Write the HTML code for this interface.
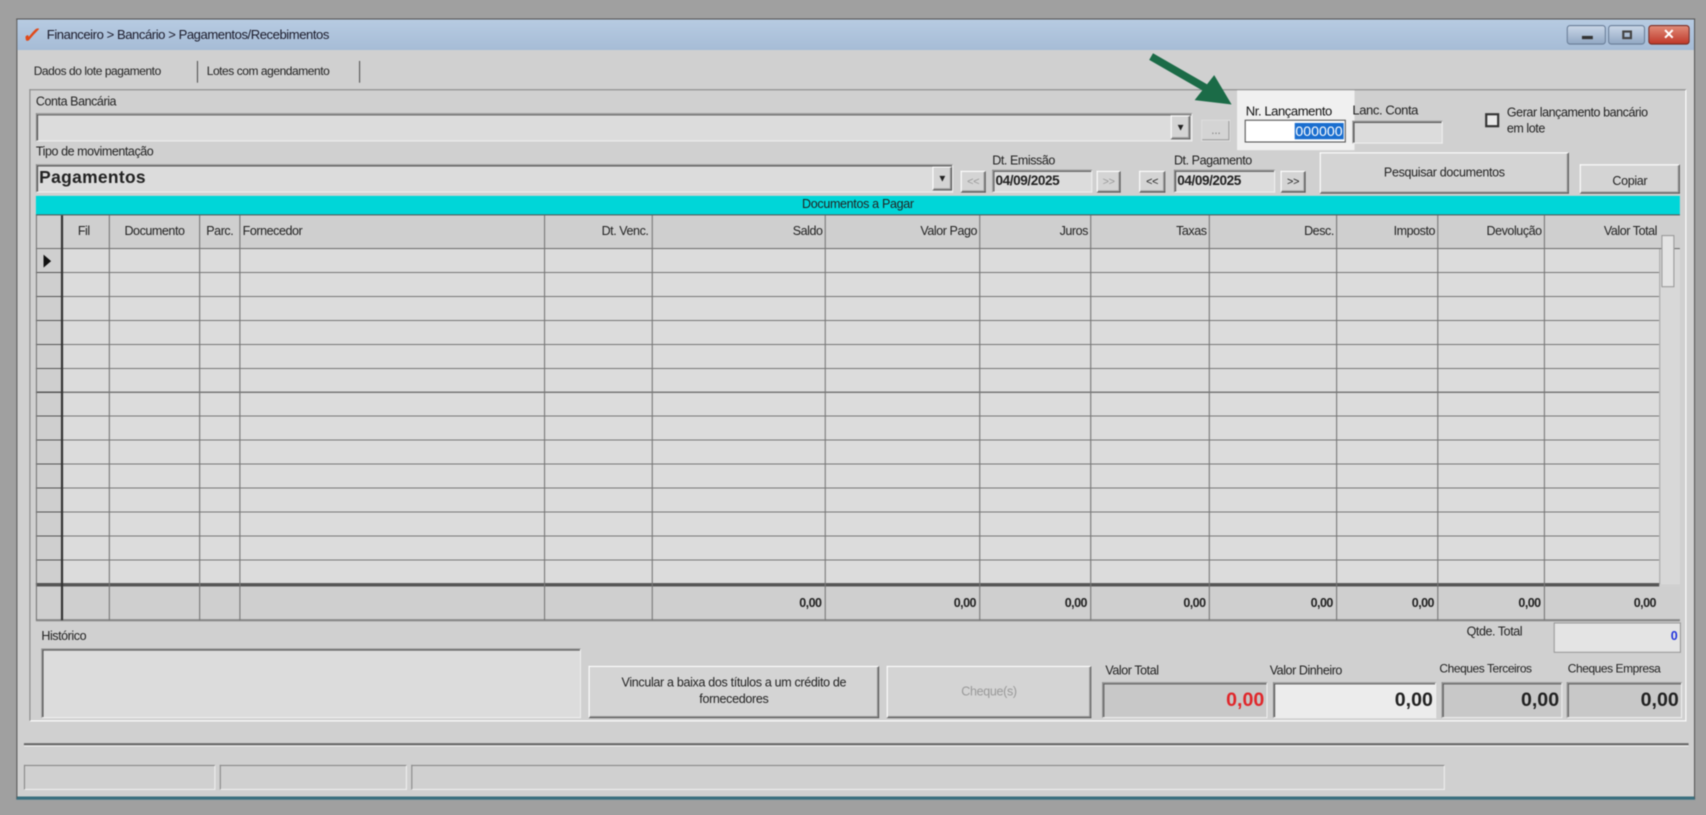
<!DOCTYPE html>
<html><head><meta charset="utf-8">
<style>
*{box-sizing:border-box;margin:0;padding:0}
html,body{width:1706px;height:815px;overflow:hidden;background:#a0a0a0}
#w{position:absolute;left:0;top:0;width:1568px;height:749px;transform:scale(1.0880,1.0881);transform-origin:0 0;font-family:"Liberation Sans",sans-serif;font-size:11.5px;color:#222;filter:blur(0.5px)}
.a{position:absolute}
.in{position:absolute;background:#dcdcdc;border:1px solid #888;border-right-color:#eee;border-bottom-color:#eee;box-shadow:inset 1px 1px 0 #555}
.btn{position:absolute;background:#d4d4d4;border:1px solid #fff;border-right-color:#555;border-bottom-color:#555;box-shadow:inset -1px -1px 0 #999;display:flex;align-items:center;justify-content:center;text-align:center;letter-spacing:-0.3px}
.lbl{position:absolute;white-space:nowrap;letter-spacing:-0.4px}
.v{position:absolute;top:198px;height:372px;width:1px;background:#777}
.h{position:absolute;top:198px;text-align:right;white-space:nowrap;letter-spacing:-0.4px;line-height:30px}
.t{position:absolute;top:540px;line-height:30px;font-weight:bold;text-align:right;letter-spacing:-0.5px}
</style></head><body><div id="w">
<div class="a" style="left:15px;top:17px;width:1543px;height:718px;background:#d0d0d0;border:1px solid #555;border-bottom:3px solid #3a6f7e"></div>
<div class="a" style="left:16px;top:18px;width:1541px;height:28px;background:linear-gradient(#b7cbe2,#a6bcd6)"></div>
<div class="lbl" style="left:21px;top:20px;color:#e04a1a;font-size:20px;font-weight:bold;transform:skewX(-10deg)">✓</div>
<div class="lbl" style="left:43px;top:25px;font-size:12px;color:#1a1a2a">Financeiro &gt; Bancário &gt; Pagamentos/Recebimentos</div>
<div class="a" style="left:1440px;top:23px;width:36px;height:18px;border-radius:3px;background:linear-gradient(#c9d6e6,#93a9c4);border:1px solid #6b7f99"><div class="a" style="left:13px;top:9px;width:10px;height:3px;background:#333"></div></div>
<div class="a" style="left:1478px;top:23px;width:34px;height:18px;border-radius:3px;background:linear-gradient(#c9d6e6,#93a9c4);border:1px solid #6b7f99"><div class="a" style="left:12px;top:4px;width:9px;height:8px;border:2px solid #444"></div></div>
<div class="a" style="left:1515px;top:23px;width:38px;height:18px;border-radius:3px;background:linear-gradient(#e08a77,#c0392b);border:1px solid #7a2a20;color:#fff;font-weight:bold;text-align:center;font-size:13px;line-height:16px">✕</div>
<div class="lbl" style="left:31px;top:60px;font-size:11px">Dados do lote pagamento</div>
<div class="a" style="left:181px;top:56px;width:1px;height:20px;background:#555"></div>
<div class="lbl" style="left:190px;top:60px;font-size:11px">Lotes com agendamento</div>
<div class="a" style="left:330px;top:56px;width:1px;height:20px;background:#555"></div>
<div class="a" style="left:27px;top:82px;width:1523px;height:581px;border:1px solid #888;border-right-color:#fff;border-bottom-color:#fff"></div>
<div class="lbl" style="left:33px;top:88px">Conta Bancária</div>
<div class="in" style="left:33px;top:104px;width:1063px;height:26px"></div>
<div class="btn" style="left:1076px;top:106px;width:18px;height:22px;font-size:9px">▼</div>
<div class="btn" style="left:1104px;top:110px;width:27px;height:20px;color:#888;border-color:#ddd">...</div>
<div class="a" style="left:1137px;top:83px;width:108px;height:55px;background:#f0f0f0"></div>
<div class="lbl" style="left:1145px;top:95px;font-size:12px;color:#111">Nr. Lançamento</div>
<div class="a" style="left:1144px;top:110px;width:93px;height:21px;background:#fff;border:1px solid #555"><span class="a" style="right:1px;top:2px;background:#1a6ecf;color:#fff;font-size:13px;padding:0 1px">000000</span></div>
<div class="lbl" style="left:1243px;top:94px;font-size:12px">Lanc. Conta</div>
<div class="in" style="left:1243px;top:111px;width:83px;height:21px"></div>
<div class="a" style="left:1365px;top:104px;width:13px;height:13px;border:2px solid #333;background:#e8e8e8"></div>
<div class="lbl" style="left:1385px;top:97px;line-height:15px">Gerar lançamento bancário<br>em lote</div>
<svg class="a" style="left:1050px;top:45px" width="95" height="60"><line x1="8" y1="7" x2="62" y2="38" stroke="#1b6b47" stroke-width="7"/><polygon points="82,51 48,47 66,24" fill="#1b6b47"/></svg>
<div class="lbl" style="left:33px;top:134px">Tipo de movimentação</div>
<div class="in" style="left:33px;top:151px;width:843px;height:26px"></div>
<div class="lbl" style="left:36px;top:155px;font-size:16px;font-weight:bold;letter-spacing:0.3px">Pagamentos</div>
<div class="btn" style="left:857px;top:153px;width:18px;height:22px;font-size:9px">▼</div>
<div class="btn" style="left:883px;top:157px;width:23px;height:20px;color:#999;font-size:10px">&lt;&lt;</div>
<div class="lbl" style="left:912px;top:142px">Dt. Emissão</div>
<div class="in" style="left:912px;top:156px;width:92px;height:21px"></div>
<div class="lbl" style="left:915px;top:159px;font-weight:bold;font-size:12.5px">04/09/2025</div>
<div class="btn" style="left:1008px;top:157px;width:22px;height:20px;color:#999;font-size:10px">&gt;&gt;</div>
<div class="btn" style="left:1047px;top:157px;width:24px;height:20px;font-size:10px">&lt;&lt;</div>
<div class="lbl" style="left:1079px;top:142px">Dt. Pagamento</div>
<div class="in" style="left:1079px;top:156px;width:93px;height:21px"></div>
<div class="lbl" style="left:1082px;top:159px;font-weight:bold;font-size:12.5px">04/09/2025</div>
<div class="btn" style="left:1177px;top:157px;width:23px;height:20px;font-size:10px">&gt;&gt;</div>
<div class="btn" style="left:1213px;top:140px;width:229px;height:38px">Pesquisar documentos</div>
<div class="btn" style="left:1452px;top:151px;width:92px;height:27px;padding-top:4px">Copiar</div>
<div class="a" style="left:33px;top:180px;width:1511px;height:18px;background:#00d6d8;border-bottom:1px solid #555;text-align:center;line-height:17px;letter-spacing:-0.3px">Documentos a Pagar</div>
<div class="a" style="left:33px;top:198px;width:1511px;height:31px;background:#cfcfcf;border-bottom:1px solid #666"></div>
<div class="a" style="left:33px;top:229px;width:1492px;height:308px;background:#dcdcdc repeating-linear-gradient(#dcdcdc 0 21px,#777 21px 22px)"></div>
<div class="a" style="left:33px;top:229px;width:24px;height:308px;background:#cfcfcf repeating-linear-gradient(#cfcfcf 0 21px,#555 21px 22px)"></div>
<div class="a" style="left:40px;top:234px;width:0;height:0;border-left:7px solid #111;border-top:6px solid transparent;border-bottom:6px solid transparent"></div>
<div class="a" style="left:1525px;top:229px;width:19px;height:308px;background:#d8d8d8;border-left:1px solid #aaa"></div>
<div class="a" style="left:1527px;top:216px;width:12px;height:48px;background:#e4e4e4;border:1px solid #999"></div>
<div class="a" style="left:33px;top:536px;width:1492px;height:3px;background:#555"></div>
<div class="a" style="left:33px;top:539px;width:1511px;height:32px;background:#cfcfcf;border-bottom:2px solid #888"></div>
<div class="a" style="left:33px;top:198px;width:1px;height:372px;background:#777"></div>
<div class="a" style="left:56px;top:198px;width:2px;height:372px;background:#333"></div>
<div class="v" style="left:100px"></div><div class="v" style="left:183px"></div><div class="v" style="left:220px"></div><div class="v" style="left:500px"></div><div class="v" style="left:599px"></div><div class="v" style="left:758px"></div><div class="v" style="left:900px"></div><div class="v" style="left:1002px"></div><div class="v" style="left:1111px"></div><div class="v" style="left:1228px"></div><div class="v" style="left:1321px"></div><div class="v" style="left:1419px"></div>
<div class="h" style="left:58px;width:38px;text-align:center">Fil</div>
<div class="h" style="left:101px;width:82px;text-align:center">Documento</div>
<div class="h" style="left:184px;width:36px;text-align:center">Parc.</div>
<div class="h" style="left:223px;text-align:left">Fornecedor</div>
<div class="h" style="left:500px;width:96px">Dt. Venc.</div>
<div class="h" style="left:599px;width:157px">Saldo</div>
<div class="h" style="left:758px;width:140px">Valor Pago</div>
<div class="h" style="left:900px;width:100px">Juros</div>
<div class="h" style="left:1002px;width:107px">Taxas</div>
<div class="h" style="left:1111px;width:115px">Desc.</div>
<div class="h" style="left:1228px;width:91px">Imposto</div>
<div class="h" style="left:1321px;width:96px">Devolução</div>
<div class="h" style="left:1419px;width:104px">Valor Total</div>
<div class="t" style="left:599px;width:156px">0,00</div>
<div class="t" style="left:758px;width:139px">0,00</div>
<div class="t" style="left:900px;width:99px">0,00</div>
<div class="t" style="left:1002px;width:106px">0,00</div>
<div class="t" style="left:1111px;width:114px">0,00</div>
<div class="t" style="left:1228px;width:90px">0,00</div>
<div class="t" style="left:1321px;width:95px">0,00</div>
<div class="t" style="left:1419px;width:103px">0,00</div>
<div class="lbl" style="left:38px;top:579px">Histórico</div>
<div class="in" style="left:38px;top:596px;width:496px;height:64px"></div>
<div class="lbl" style="left:1348px;top:575px">Qtde. Total</div>
<div class="a" style="left:1428px;top:572px;width:117px;height:28px;background:#e4e4e4;border:1px solid #999;text-align:right;color:#2233dd;font-weight:bold;line-height:24px;padding-right:2px">0</div>
<div class="btn" style="left:541px;top:612px;width:267px;height:48px;line-height:15px">Vincular a baixa dos títulos a um crédito de<br>fornecedores</div>
<div class="btn" style="left:815px;top:612px;width:188px;height:48px;color:#999">Cheque(s)</div>
<div class="lbl" style="left:1016px;top:611px">Valor Total</div>
<div class="lbl" style="left:1167px;top:611px">Valor Dinheiro</div>
<div class="lbl" style="left:1323px;top:609px;font-size:11px">Cheques Terceiros</div>
<div class="lbl" style="left:1441px;top:609px;font-size:11px">Cheques Empresa</div>
<div class="in" style="left:1013px;top:627px;width:152px;height:33px;background:#c8c8c8;text-align:right;font-size:18px;font-weight:bold;color:#e0262a;line-height:31px;padding-right:2px">0,00</div>
<div class="in" style="left:1170px;top:627px;width:150px;height:33px;background:#ececec;text-align:right;font-size:18px;font-weight:bold;line-height:31px;padding-right:2px">0,00</div>
<div class="in" style="left:1325px;top:627px;width:111px;height:33px;background:#c8c8c8;text-align:right;font-size:18px;font-weight:bold;line-height:31px;padding-right:2px">0,00</div>
<div class="in" style="left:1440px;top:627px;width:106px;height:33px;background:#c8c8c8;text-align:right;font-size:18px;font-weight:bold;line-height:31px;padding-right:2px">0,00</div>
<div class="a" style="left:22px;top:683px;width:1530px;height:3px;background:#666;border-bottom:1px solid #fff"></div>
<div class="in" style="left:22px;top:703px;width:176px;height:23px;background:#d0d0d0;box-shadow:none"></div>
<div class="in" style="left:202px;top:703px;width:172px;height:23px;background:#d0d0d0;box-shadow:none"></div>
<div class="in" style="left:378px;top:703px;width:950px;height:23px;background:#d0d0d0;box-shadow:none"></div>
</div></body></html>
